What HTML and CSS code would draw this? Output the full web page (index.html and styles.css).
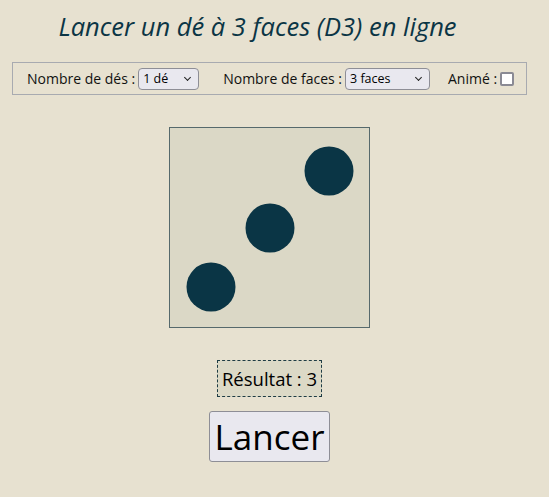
FILE: index.html
```html
<!DOCTYPE html>
<html lang="fr">
<head>
<meta charset="utf-8">
<title>Lancer un dé à 3 faces (D3) en ligne</title>
<link rel="stylesheet" href="styles.css">
</head>
<body>
<h1 class="title">Lancer un dé à 3 faces (D3) en ligne</h1>
<div class="toolbar">
  <label class="field field-dice">Nombre de dés : <span class="sel-wrap"><select class="sel sel-dice"><option>1 dé</option></select></span></label>
  <label class="field field-faces">Nombre de faces : <span class="sel-wrap"><select class="sel sel-faces"><option>3 faces</option></select></span></label>
  <label class="field">Animé : <input type="checkbox" class="check"></label>
</div>
<div class="stage">
  <div class="die">
    <svg width="199" height="199" viewBox="0 0 199 199">
      <circle cx="159" cy="43" r="24.5" fill="#0a3545"/>
      <circle cx="100" cy="100" r="24.5" fill="#0a3545"/>
      <circle cx="41" cy="159" r="24.5" fill="#0a3545"/>
    </svg>
  </div>
  <div class="result">Résultat : 3</div>
  <button class="roll">Lancer</button>
</div>
</body>
</html>
```
FILE: styles.css
```css
html, body {
  margin: 0;
  padding: 0;
  background: #e7e1d0;
}
body {
  font-family: "Open Sans", "Noto Sans", sans-serif;
  color: #111;
  width: 539px;
}
.title {
  margin: 0;
  padding-top: 8px;
  padding-right: 24px;
  height: 54px;
  box-sizing: border-box;
  text-align: center;
  font-style: italic;
  font-weight: normal;
  font-size: 25.5px;
  line-height: 36px;
  color: #0b3545;
}
.toolbar {
  margin: 8px 12px 0 12px;
  height: 33px;
  box-sizing: border-box;
  border: 1px solid #a8aab0;
  display: flex;
  align-items: center;
  padding-left: 14px;
  font-size: 14px;
}
.field {
  display: flex;
  align-items: center;
  gap: 3px;
}
.field-dice { margin-right: 24px; }
.field-faces { margin-right: 18px; }
.sel-wrap {
  position: relative;
  display: inline-block;
}
.sel-wrap::after {
  content: "";
  position: absolute;
  right: 9px;
  top: 7px;
  width: 4px;
  height: 4px;
  border-right: 1.3px solid #222;
  border-bottom: 1.3px solid #222;
  transform: rotate(45deg);
  pointer-events: none;
}
.sel {
  -webkit-appearance: none;
  appearance: none;
  display: block;
  font-family: "Open Sans", sans-serif;
  font-size: 12.5px;
  color: #000;
  height: 22px;
  background: #e9e8ef;
  border: 1px solid #8e8e96;
  border-radius: 4px;
  padding: 0 4px;
}
.sel-dice { width: 61px; }
.sel-faces { width: 85px; }
.check {
  -webkit-appearance: none;
  appearance: none;
  margin: 0;
  width: 14px;
  height: 14px;
  border: 2px solid #8a8a94;
  border-radius: 2px;
  background: #fff;
  box-sizing: border-box;
}
.stage {
  display: flex;
  flex-direction: column;
  align-items: center;
  padding-top: 32px;
}
.die {
  width: 199px;
  height: 199px;
  border: 1px solid #56696c;
  background: #dbd8c6;
}
.die svg { display: block; }
.result {
  margin-top: 32px;
  border: 1px dashed #1e3c44;
  background: #dcd9c6;
  font-size: 18.5px;
  height: 37px;
  box-sizing: border-box;
  padding: 0 4px;
  line-height: 35px;
  color: #000;
}
.roll {
  margin-top: 14px;
  font-family: "Open Sans", sans-serif;
  font-size: 35px;
  height: 51px;
  padding: 0 5px;
  line-height: 1;
  background: #e9e8ef;
  border: 1px solid #8e8e96;
  border-radius: 3px;
  color: #000;
}
```
